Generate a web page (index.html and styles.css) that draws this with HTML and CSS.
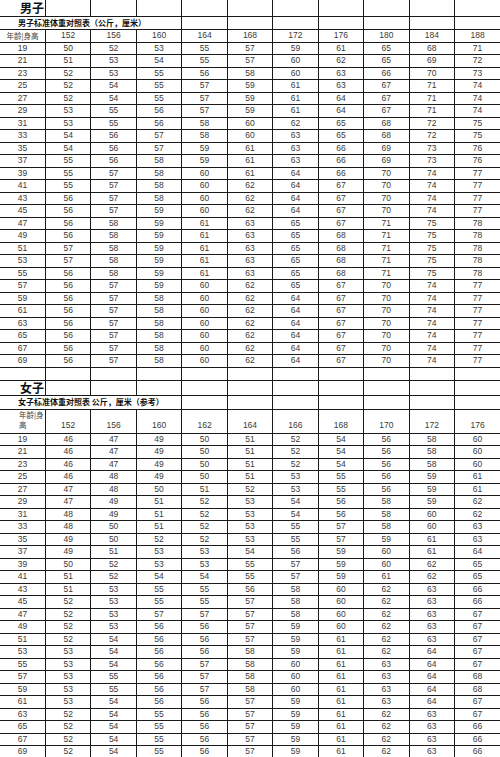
FILE: index.html
```html
<!DOCTYPE html>
<html lang="zh">
<head>
<meta charset="utf-8">
<title>标准体重对照表</title>
<link rel="stylesheet" href="styles.css">
</head>
<body>
<table class="sheet">
<tbody>
<tr class="title"><td class="big">男子</td><td></td><td></td><td></td><td></td><td></td><td></td><td></td><td></td><td></td><td></td></tr>
<tr class="sub"><td colspan="4" class="subt">男子标准体重对照表（公斤，厘米）</td><td></td><td></td><td></td><td></td><td></td><td></td><td></td></tr>
<tr class="head"><td class="lab">年龄|身高</td><td>152</td><td>156</td><td>160</td><td>164</td><td>168</td><td>172</td><td>176</td><td>180</td><td>184</td><td>188</td></tr>
<tr><td>19</td><td>50</td><td>52</td><td>53</td><td>55</td><td>57</td><td>59</td><td>61</td><td>65</td><td>68</td><td>71</td></tr>
<tr><td>21</td><td>51</td><td>53</td><td>54</td><td>55</td><td>57</td><td>60</td><td>62</td><td>65</td><td>69</td><td>72</td></tr>
<tr><td>23</td><td>52</td><td>53</td><td>55</td><td>56</td><td>58</td><td>60</td><td>63</td><td>66</td><td>70</td><td>73</td></tr>
<tr><td>25</td><td>52</td><td>54</td><td>55</td><td>57</td><td>59</td><td>61</td><td>63</td><td>67</td><td>71</td><td>74</td></tr>
<tr><td>27</td><td>52</td><td>54</td><td>55</td><td>57</td><td>59</td><td>61</td><td>64</td><td>67</td><td>71</td><td>74</td></tr>
<tr><td>29</td><td>53</td><td>55</td><td>56</td><td>57</td><td>59</td><td>61</td><td>64</td><td>67</td><td>71</td><td>74</td></tr>
<tr><td>31</td><td>53</td><td>55</td><td>56</td><td>58</td><td>60</td><td>62</td><td>65</td><td>68</td><td>72</td><td>75</td></tr>
<tr><td>33</td><td>54</td><td>56</td><td>57</td><td>58</td><td>60</td><td>63</td><td>65</td><td>68</td><td>72</td><td>75</td></tr>
<tr><td>35</td><td>54</td><td>56</td><td>57</td><td>59</td><td>61</td><td>63</td><td>66</td><td>69</td><td>73</td><td>76</td></tr>
<tr><td>37</td><td>55</td><td>56</td><td>58</td><td>59</td><td>61</td><td>63</td><td>66</td><td>69</td><td>73</td><td>76</td></tr>
<tr><td>39</td><td>55</td><td>57</td><td>58</td><td>60</td><td>61</td><td>64</td><td>66</td><td>70</td><td>74</td><td>77</td></tr>
<tr><td>41</td><td>55</td><td>57</td><td>58</td><td>60</td><td>62</td><td>64</td><td>67</td><td>70</td><td>74</td><td>77</td></tr>
<tr><td>43</td><td>56</td><td>57</td><td>58</td><td>60</td><td>62</td><td>64</td><td>67</td><td>70</td><td>74</td><td>77</td></tr>
<tr><td>45</td><td>56</td><td>57</td><td>59</td><td>60</td><td>62</td><td>64</td><td>67</td><td>70</td><td>74</td><td>77</td></tr>
<tr><td>47</td><td>56</td><td>58</td><td>59</td><td>61</td><td>63</td><td>65</td><td>67</td><td>71</td><td>75</td><td>78</td></tr>
<tr><td>49</td><td>56</td><td>58</td><td>59</td><td>61</td><td>63</td><td>65</td><td>68</td><td>71</td><td>75</td><td>78</td></tr>
<tr><td>51</td><td>57</td><td>58</td><td>59</td><td>61</td><td>63</td><td>65</td><td>68</td><td>71</td><td>75</td><td>78</td></tr>
<tr><td>53</td><td>57</td><td>58</td><td>59</td><td>61</td><td>63</td><td>65</td><td>68</td><td>71</td><td>75</td><td>78</td></tr>
<tr><td>55</td><td>56</td><td>58</td><td>59</td><td>61</td><td>63</td><td>65</td><td>68</td><td>71</td><td>75</td><td>78</td></tr>
<tr><td>57</td><td>56</td><td>57</td><td>59</td><td>60</td><td>62</td><td>65</td><td>67</td><td>70</td><td>74</td><td>77</td></tr>
<tr><td>59</td><td>56</td><td>57</td><td>58</td><td>60</td><td>62</td><td>64</td><td>67</td><td>70</td><td>74</td><td>77</td></tr>
<tr><td>61</td><td>56</td><td>57</td><td>58</td><td>60</td><td>62</td><td>64</td><td>67</td><td>70</td><td>74</td><td>77</td></tr>
<tr><td>63</td><td>56</td><td>57</td><td>58</td><td>60</td><td>62</td><td>64</td><td>67</td><td>70</td><td>74</td><td>77</td></tr>
<tr><td>65</td><td>56</td><td>57</td><td>58</td><td>60</td><td>62</td><td>64</td><td>67</td><td>70</td><td>74</td><td>77</td></tr>
<tr><td>67</td><td>56</td><td>57</td><td>58</td><td>60</td><td>62</td><td>64</td><td>67</td><td>70</td><td>74</td><td>77</td></tr>
<tr><td>69</td><td>56</td><td>57</td><td>58</td><td>60</td><td>62</td><td>64</td><td>67</td><td>70</td><td>74</td><td>77</td></tr>
<tr class="gap"><td></td><td></td><td></td><td></td><td></td><td></td><td></td><td></td><td></td><td></td><td></td></tr>
<tr class="title2"><td class="big">女子</td><td></td><td></td><td></td><td></td><td></td><td></td><td></td><td></td><td></td><td></td></tr>
<tr class="sub2"><td colspan="4" class="subt">女子标准体重对照表 公斤，厘米（参考）</td><td></td><td></td><td></td><td></td><td></td><td></td><td></td></tr>
<tr class="head2"><td class="lab2">年龄|身高</td><td>152</td><td>156</td><td>160</td><td>162</td><td>164</td><td>166</td><td>168</td><td>170</td><td>172</td><td>176</td></tr>
<tr><td>19</td><td>46</td><td>47</td><td>49</td><td>50</td><td>51</td><td>52</td><td>54</td><td>56</td><td>58</td><td>60</td></tr>
<tr><td>21</td><td>46</td><td>47</td><td>49</td><td>50</td><td>51</td><td>52</td><td>54</td><td>56</td><td>58</td><td>60</td></tr>
<tr><td>23</td><td>46</td><td>47</td><td>49</td><td>50</td><td>51</td><td>52</td><td>54</td><td>56</td><td>58</td><td>60</td></tr>
<tr><td>25</td><td>46</td><td>48</td><td>49</td><td>50</td><td>51</td><td>53</td><td>55</td><td>56</td><td>59</td><td>61</td></tr>
<tr><td>27</td><td>47</td><td>48</td><td>50</td><td>51</td><td>52</td><td>53</td><td>55</td><td>56</td><td>59</td><td>61</td></tr>
<tr><td>29</td><td>47</td><td>49</td><td>51</td><td>52</td><td>53</td><td>54</td><td>56</td><td>58</td><td>59</td><td>62</td></tr>
<tr><td>31</td><td>48</td><td>49</td><td>51</td><td>52</td><td>53</td><td>54</td><td>56</td><td>58</td><td>60</td><td>62</td></tr>
<tr><td>33</td><td>48</td><td>50</td><td>51</td><td>52</td><td>53</td><td>55</td><td>57</td><td>58</td><td>60</td><td>63</td></tr>
<tr><td>35</td><td>49</td><td>50</td><td>52</td><td>52</td><td>53</td><td>55</td><td>57</td><td>59</td><td>61</td><td>63</td></tr>
<tr><td>37</td><td>49</td><td>51</td><td>53</td><td>53</td><td>54</td><td>56</td><td>59</td><td>60</td><td>61</td><td>64</td></tr>
<tr><td>39</td><td>50</td><td>52</td><td>53</td><td>53</td><td>55</td><td>57</td><td>59</td><td>60</td><td>62</td><td>65</td></tr>
<tr><td>41</td><td>51</td><td>52</td><td>54</td><td>54</td><td>55</td><td>57</td><td>59</td><td>61</td><td>62</td><td>65</td></tr>
<tr><td>43</td><td>51</td><td>53</td><td>55</td><td>55</td><td>56</td><td>58</td><td>60</td><td>62</td><td>63</td><td>66</td></tr>
<tr><td>45</td><td>52</td><td>53</td><td>55</td><td>55</td><td>57</td><td>58</td><td>60</td><td>62</td><td>63</td><td>66</td></tr>
<tr><td>47</td><td>52</td><td>53</td><td>57</td><td>57</td><td>57</td><td>58</td><td>60</td><td>62</td><td>63</td><td>67</td></tr>
<tr><td>49</td><td>52</td><td>53</td><td>56</td><td>56</td><td>57</td><td>59</td><td>60</td><td>62</td><td>63</td><td>67</td></tr>
<tr><td>51</td><td>52</td><td>54</td><td>56</td><td>56</td><td>57</td><td>59</td><td>61</td><td>62</td><td>63</td><td>67</td></tr>
<tr><td>53</td><td>53</td><td>54</td><td>56</td><td>56</td><td>58</td><td>59</td><td>61</td><td>62</td><td>64</td><td>67</td></tr>
<tr><td>55</td><td>53</td><td>54</td><td>56</td><td>57</td><td>58</td><td>60</td><td>61</td><td>63</td><td>64</td><td>67</td></tr>
<tr><td>57</td><td>53</td><td>55</td><td>56</td><td>57</td><td>58</td><td>60</td><td>61</td><td>63</td><td>64</td><td>68</td></tr>
<tr><td>59</td><td>53</td><td>55</td><td>56</td><td>57</td><td>58</td><td>60</td><td>61</td><td>63</td><td>64</td><td>68</td></tr>
<tr><td>61</td><td>53</td><td>54</td><td>56</td><td>56</td><td>57</td><td>59</td><td>61</td><td>63</td><td>64</td><td>67</td></tr>
<tr><td>63</td><td>52</td><td>54</td><td>55</td><td>56</td><td>57</td><td>59</td><td>61</td><td>62</td><td>63</td><td>67</td></tr>
<tr><td>65</td><td>52</td><td>54</td><td>55</td><td>56</td><td>57</td><td>59</td><td>61</td><td>62</td><td>63</td><td>66</td></tr>
<tr><td>67</td><td>52</td><td>54</td><td>55</td><td>56</td><td>57</td><td>59</td><td>61</td><td>62</td><td>63</td><td>66</td></tr>
<tr><td>69</td><td>52</td><td>54</td><td>55</td><td>56</td><td>57</td><td>59</td><td>61</td><td>62</td><td>63</td><td>66</td></tr>
</tbody>
</table>
</body>
</html>
```

FILE: styles.css
```css
html, body {
  margin: 0;
  padding: 0;
  background: #fff;
}

.sheet {
  width: 500px;
  table-layout: fixed;
  border-collapse: collapse;
  font-family: "Liberation Sans", Arial, "Noto Sans CJK SC", sans-serif;
  font-size: 8.5px;
  color: #3a3a3a;
}

.sheet tr {
  height: 12.5px;
}

.sheet td {
  padding: 0;
  border: 1px solid #1a1a1a;
  text-align: center;
  vertical-align: middle;
  line-height: 9px;
  white-space: nowrap;
  overflow: visible;
}

.sheet tr:first-child td {
  border-top: none;
}

.sheet td:first-child {
  border-left: none;
}

.sheet td:last-child {
  border-right: none;
}

.sheet tr.title { height: 16px; }
.sheet tr.sub { height: 13px; }
.sheet tr.head { height: 13px; }
.sheet tr.gap { height: 13px; }
.sheet tr.title2 { height: 15px; }
.sheet tr.sub2 { height: 14px; }
.sheet tr.head2 { height: 23px; }

.sheet td.big {
  text-align: left;
  padding-left: 20px;
  font-family: "Noto Sans CJK SC", sans-serif;
  font-weight: 700;
  font-size: 12px;
  line-height: 13px;
  color: #111;
}

.sheet td.subt {
  text-align: left;
  padding-left: 18px;
  font-family: "Noto Sans CJK SC", sans-serif;
  font-weight: 700;
  font-size: 8px;
  line-height: 10px;
  color: #111;
}

.sheet td.lab {
  font-family: "Noto Sans CJK SC", sans-serif;
  font-size: 7.5px;
}

.sheet tr.head2 td {
  vertical-align: bottom;
  padding-bottom: 3px;
}

.sheet td.lab2 {
  text-align: left;
  padding-left: 19px;
  white-space: normal;
  line-break: anywhere;
  font-family: "Noto Sans CJK SC", sans-serif;
  font-size: 7.5px;
  line-height: 10px;
}
```
